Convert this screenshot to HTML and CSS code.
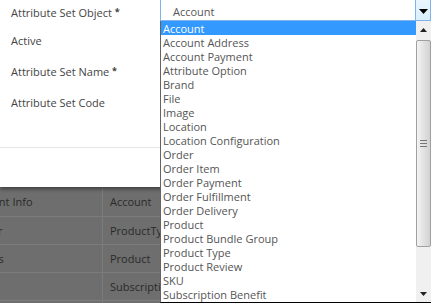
FILE: index.html
```html
<!DOCTYPE html>
<html lang="en">
<head>
    <meta charset="UTF-8">
    <meta name="viewport" content="width=device-width, initial-scale=1">
    <title>Attribute Set</title>
    <link rel="stylesheet" href="styles.css">
</head>
<body>
    <div class="modal">
        <div class="modal-body">
            <div class="form-row row-object">
                <label>Attribute Set Object <span class="req">*</span></label>
            </div>
            <div class="form-row row-active">
                <label>Active</label>
            </div>
            <div class="form-row row-name">
                <label>Attribute Set Name <span class="req">*</span></label>
            </div>
            <div class="form-row row-code">
                <label>Attribute Set Code</label>
            </div>
        </div>
        <div class="modal-footer"></div>
    </div>

    <table class="grid">
        <tr><td class="c1">Account Info</td><td class="c2">Account</td></tr>
        <tr><td class="c1">Owner</td><td class="c2">ProductType</td></tr>
        <tr><td class="c1">Orders</td><td class="c2">Product</td></tr>
        <tr><td class="c1">Plan</td><td class="c2">Subscription</td></tr>
        <tr><td class="c1">SKU</td><td class="c2">Order</td></tr>
    </table>

    <div class="select">
        <span class="select-value">Account</span>
        <span class="select-btn">
            <svg width="9" height="5" viewBox="0 0 9 5"><path d="M0 0h9L4.5 5z" fill="#000"/></svg>
        </span>
    </div>

    <div class="dropdown">
        <ul class="options">
            <li class="selected">Account</li>
            <li>Account Address</li>
            <li>Account Payment</li>
            <li>Attribute Option</li>
            <li>Brand</li>
            <li>File</li>
            <li>Image</li>
            <li>Location</li>
            <li>Location Configuration</li>
            <li>Order</li>
            <li>Order Item</li>
            <li>Order Payment</li>
            <li>Order Fulfillment</li>
            <li>Order Delivery</li>
            <li>Product</li>
            <li>Product Bundle Group</li>
            <li>Product Type</li>
            <li>Product Review</li>
            <li>SKU</li>
            <li>Subscription Benefit</li>
        </ul>
        <div class="scrollbar">
            <div class="sb-arrow">
                <svg width="7" height="4" viewBox="0 0 7 4"><path d="M0 4h7L3.5 0z" fill="#222"/></svg>
            </div>
            <div class="sb-track">
                <div class="sb-thumb">
                    <svg width="7" height="7" viewBox="0 0 7 7"><path d="M0 .5h7M0 3.5h7M0 6.5h7" stroke="#777" stroke-width="1"/></svg>
                </div>
            </div>
            <div class="sb-arrow">
                <svg width="7" height="4" viewBox="0 0 7 4"><path d="M0 0h7L3.5 4z" fill="#222"/></svg>
            </div>
        </div>
    </div>
</body>
</html>
```

FILE: styles.css
```css
body {
    margin: 0;
    width: 431px;
    height: 303px;
    overflow: hidden;
    position: relative;
    font-family: 'Open Sans', 'Liberation Sans', sans-serif;
    font-size: 11px;
    background-color: #6e6e6e;
}
.modal {
    background-color: #fff;
    height: 187px;
    box-shadow: 0 2px 4px rgba(0, 0, 0, 0.45);
    position: relative;
    z-index: 1;
}
.modal-body {
    height: 148px;
    padding-left: 11px;
    border-bottom: 1px solid #e5e5e5;
    box-sizing: border-box;
}
.form-row {
    display: flex;
    align-items: center;
}
.row-object {
    height: 25px;
}
.row-active {
    height: 31px;
}
.row-name {
    height: 31px;
}
.row-code {
    height: 30px;
}
label {
    color: #444;
}
.req {
    font-size: 9px;
    font-weight: bold;
    position: relative;
    top: -2px;
}
.grid {
    border-collapse: collapse;
    margin-left: -39px;
    color: #2a2a2a;
}
.grid td {
    height: 27px;
    padding: 0 7px;
    border-bottom: 1px solid #7c7c7c;
    white-space: nowrap;
    vertical-align: middle;
}
.grid tr:first-child td {
    height: 29px;
}
.grid .c1 {
    width: 127px;
    border-right: 1px solid #7c7c7c;
}
.grid .c2 {
    width: 200px;
}
.select {
    position: absolute;
    left: 160px;
    top: -4px;
    width: 271px;
    height: 25px;
    box-sizing: border-box;
    border: 1px solid #7eb4ea;
    background: #fff;
    display: flex;
    align-items: center;
    z-index: 2;
}
.select-value {
    flex: 1;
    padding-left: 12px;
    padding-top: 6px;
    color: #555;
}
.select-btn {
    width: 15px;
    height: 23px;
    box-sizing: border-box;
    border-left: 1px solid #7eb4ea;
    background: linear-gradient(#eaf6fd, #d9f0fc);
    display: flex;
    align-items: center;
    justify-content: center;
    padding-top: 5px;
}
.dropdown {
    position: absolute;
    left: 160px;
    top: 21px;
    width: 271px;
    height: 282px;
    box-sizing: border-box;
    border-left: 1px solid #646464;
    border-bottom: 1px solid #000;
    background: #fff;
    display: flex;
    z-index: 2;
}
.options {
    list-style: none;
    margin: 0;
    padding: 0;
    flex: 1;
}
.options li {
    height: 14px;
    line-height: 16px;
    padding-left: 2px;
    color: #555;
    white-space: nowrap;
}
.options li.selected {
    background-color: #3399ff;
    color: #fff;
}
.scrollbar {
    width: 15px;
    background: #f0f0f0;
    display: flex;
    flex-direction: column;
}
.sb-arrow {
    height: 17px;
    display: flex;
    align-items: center;
    justify-content: center;
}
.sb-track {
    flex: 1;
}
.sb-thumb {
    height: 207px;
    margin: 2px 0 0 0;
    border: 1px solid #a0a0a0;
    border-radius: 2px;
    box-sizing: border-box;
    background: linear-gradient(to right, #f4f4f4, #e2e2e2 50%, #d2d2d2);
    display: flex;
    align-items: center;
    justify-content: center;
}
```
